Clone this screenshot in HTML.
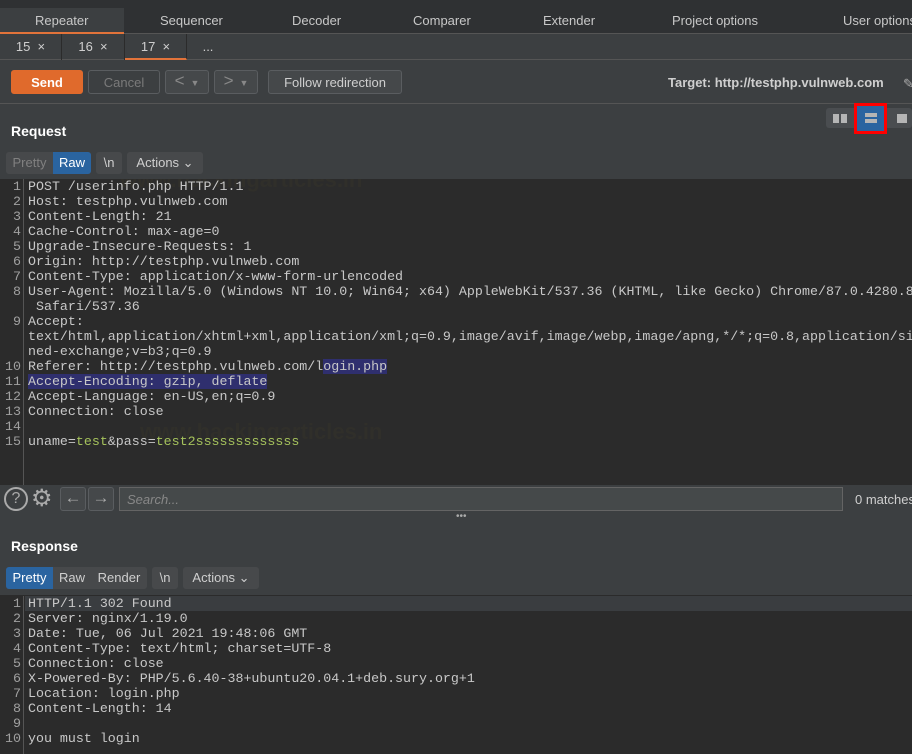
<!DOCTYPE html>
<html><head><style>
*{margin:0;padding:0;box-sizing:border-box}
body{width:912px;height:754px;overflow:hidden;background:#3c3f41;font-family:"Liberation Sans",sans-serif;color:#cfcfcf;position:relative;font-size:13px;white-space:nowrap}
.abs{position:absolute}
.top{left:0;top:0;width:912px;height:34px;background:#2f3133;border-bottom:1px solid #555}
.top span{position:absolute;top:13px;font-size:13px;color:#c8c8c8}
.sub{left:0;top:34px;width:912px;height:26px;border-bottom:1px solid #555}
.sub div{position:absolute;top:0;height:26px;border-right:1px solid #2b2b2b;font-size:13px;padding-top:5px;text-align:center}
.btn{position:absolute;border:1px solid #5a5d60;border-radius:3px;background:#45484a;color:#cfcfcf;font-size:13px;text-align:center}
.code{font-family:"Liberation Mono",monospace;font-size:13.3px;line-height:15px;white-space:pre;color:#c8c8c8}
.ed{background:#2b2b2b;left:0;width:912px;overflow:hidden}
.gut{position:absolute;left:0;width:24px;border-right:1px solid #555;text-align:right;padding-right:2px;color:#a0a0a0}
.txt{position:absolute;left:28px}
.seg{position:absolute;height:22px;font-size:13px;padding-top:3px;border-radius:3px;text-align:center}
.g{color:#a5c25c}
.hl{background:#2f2f6e}
</style></head><body>
<div class="abs top">
 <div class="abs" style="left:0;top:8px;width:124px;height:26px;background:#3c3f41;border-bottom:2px solid #e2733a"></div>
 <span style="left:35px">Repeater</span><span style="left:160px">Sequencer</span><span style="left:292px">Decoder</span><span style="left:413px">Comparer</span><span style="left:543px">Extender</span><span style="left:672px">Project options</span><span style="left:843px">User options</span>
</div>
<div class="abs sub">
 <div style="left:0;width:62px">15 &nbsp;×</div>
 <div style="left:62px;width:63px">16 &nbsp;×</div>
 <div style="left:125px;width:62px;border-bottom:2px solid #e2733a">17 &nbsp;×</div>
 <div style="left:187px;width:42px;border:none">...</div>
</div>
<div class="btn" style="left:11px;top:70px;width:72px;height:24px;background:#e06a2c;border-color:#e06a2c;color:#fff;font-weight:bold;padding-top:4px">Send</div>
<div class="btn" style="left:88px;top:70px;width:72px;height:24px;background:#3c3f41;color:#7a7a7a;padding-top:4px">Cancel</div>
<div class="btn" style="left:165px;top:70px;width:44px;height:24px;color:#888;font-size:17px;line-height:20px">&lt;<span style="font-size:9px;margin-left:6px">▼</span></div>
<div class="btn" style="left:214px;top:70px;width:44px;height:24px;color:#888;font-size:17px;line-height:20px">&gt;<span style="font-size:9px;margin-left:6px">▼</span></div>
<div class="btn" style="left:268px;top:70px;width:134px;height:24px;padding-top:4px">Follow redirection</div>
<div class="abs" style="left:668px;top:75px;font-weight:bold;font-size:13px;color:#cfcfcf">Target: http://testphp.vulnweb.com</div>
<div class="abs" style="left:903px;top:76px;color:#aaa">✎</div>
<div class="abs" style="left:0;top:103px;width:912px;height:1px;background:#555"></div>
<div class="abs" style="left:11px;top:123px;font-weight:bold;font-size:14px;color:#fff">Request</div>
<div class="abs" style="left:826px;top:108px;width:86px;height:20px;background:#4a4d50;border-radius:3px"></div>
<div class="abs" style="left:833px;top:114px;width:6px;height:9px;background:#b5b5b5"></div><div class="abs" style="left:841px;top:114px;width:6px;height:9px;background:#b5b5b5"></div>
<div class="abs" style="left:854px;top:103px;width:33px;height:31px;border:3px solid #f00"></div>
<div class="abs" style="left:857px;top:106px;width:27px;height:25px;background:#2a64a0"></div>
<div class="abs" style="left:865px;top:113px;width:12px;height:4px;background:#b5b5b5"></div><div class="abs" style="left:865px;top:119px;width:12px;height:4px;background:#b5b5b5"></div>
<div class="abs" style="left:897px;top:114px;width:10px;height:9px;background:#b5b5b5"></div>
<div class="seg" style="left:6px;top:152px;width:85px;background:#47494b"></div>
<div class="seg" style="left:6px;top:152px;width:47px;color:#808080">Pretty</div>
<div class="seg" style="left:53px;top:152px;width:38px;background:#2a64a0;color:#fff;border-radius:0 3px 3px 0">Raw</div>
<div class="seg" style="left:96px;top:152px;width:26px;background:#47494b">\n</div>
<div class="seg" style="left:127px;top:152px;width:76px;background:#47494b">Actions ⌄</div>
<div class="abs ed" style="top:179px;height:306px">
<div class="abs" style="left:120px;top:-12px;font-size:22px;font-weight:bold;color:rgba(90,80,40,.12)">www.hackingarticles.in</div>
<div class="abs" style="left:140px;top:240px;font-size:22px;font-weight:bold;color:rgba(90,80,40,.12)">www.hackingarticles.in</div>
<div class="gut code" style="top:0;height:306px">1
2
3
4
5
6
7
8

9


10
11
12
13
14
15</div>
<div class="txt code" style="top:0">POST /userinfo.php HTTP/1.1
Host: testphp.vulnweb.com
Content-Length: 21
Cache-Control: max-age=0
Upgrade-Insecure-Requests: 1
Origin: http://testphp.vulnweb.com
Content-Type: application/x-www-form-urlencoded
User-Agent: Mozilla/5.0 (Windows NT 10.0; Win64; x64) AppleWebKit/537.36 (KHTML, like Gecko) Chrome/87.0.4280.88
 Safari/537.36
Accept:
text/html,application/xhtml+xml,application/xml;q=0.9,image/avif,image/webp,image/apng,*/*;q=0.8,application/signed
ned-exchange;v=b3;q=0.9
Referer: http://testphp.vulnweb.com/l<span class="hl">ogin.php</span>
<span class="hl">Accept-Encoding: gzip, deflate</span>
Accept-Language: en-US,en;q=0.9
Connection: close

uname=<span class="g">test</span>&amp;pass=<span class="g">test2sssssssssssss</span></div>
</div>
<div class="abs" style="left:4px;top:487px;width:24px;height:24px;border:2px solid #aaa;border-radius:50%;text-align:center;font-size:16px;color:#aaa;line-height:20px">?</div>
<div class="abs" style="left:31px;top:484px;font-size:24px;color:#aaa">⚙</div>
<div class="btn" style="left:60px;top:487px;width:26px;height:24px;font-size:17px;line-height:20px;color:#aaa">←</div>
<div class="btn" style="left:88px;top:487px;width:26px;height:24px;font-size:17px;line-height:20px;color:#aaa">→</div>
<div class="abs" style="left:119px;top:487px;width:724px;height:24px;border:1px solid #646464;background:#45494a;font-style:italic;color:#888;padding:4px 7px">Search...</div>
<div class="abs" style="left:855px;top:492px">0 matches</div>
<div class="abs" style="left:456px;top:511px;font-size:10px;color:#aaa">•••</div>
<div class="abs" style="left:11px;top:538px;font-weight:bold;font-size:14px;color:#fff">Response</div>
<div class="seg" style="left:6px;top:567px;width:141px;background:#47494b"></div>
<div class="seg" style="left:6px;top:567px;width:47px;background:#2a64a0;color:#fff;border-radius:3px 0 0 3px">Pretty</div>
<div class="seg" style="left:53px;top:567px;width:38px">Raw</div>
<div class="seg" style="left:91px;top:567px;width:56px">Render</div>
<div class="seg" style="left:152px;top:567px;width:26px;background:#47494b">\n</div>
<div class="seg" style="left:183px;top:567px;width:76px;background:#47494b">Actions ⌄</div>
<div class="abs ed" style="top:595px;height:159px">
<div class="abs" style="left:25px;top:1px;width:887px;height:15px;background:#3a3d40"></div>
<div class="gut code" style="top:1px;height:158px">1
2
3
4
5
6
7
8
9
10</div>
<div class="txt code" style="top:1px">HTTP/1.1 302 Found
Server: nginx/1.19.0
Date: Tue, 06 Jul 2021 19:48:06 GMT
Content-Type: text/html; charset=UTF-8
Connection: close
X-Powered-By: PHP/5.6.40-38+ubuntu20.04.1+deb.sury.org+1
Location: login.php
Content-Length: 14

you must login</div>
</div>
</body></html>
